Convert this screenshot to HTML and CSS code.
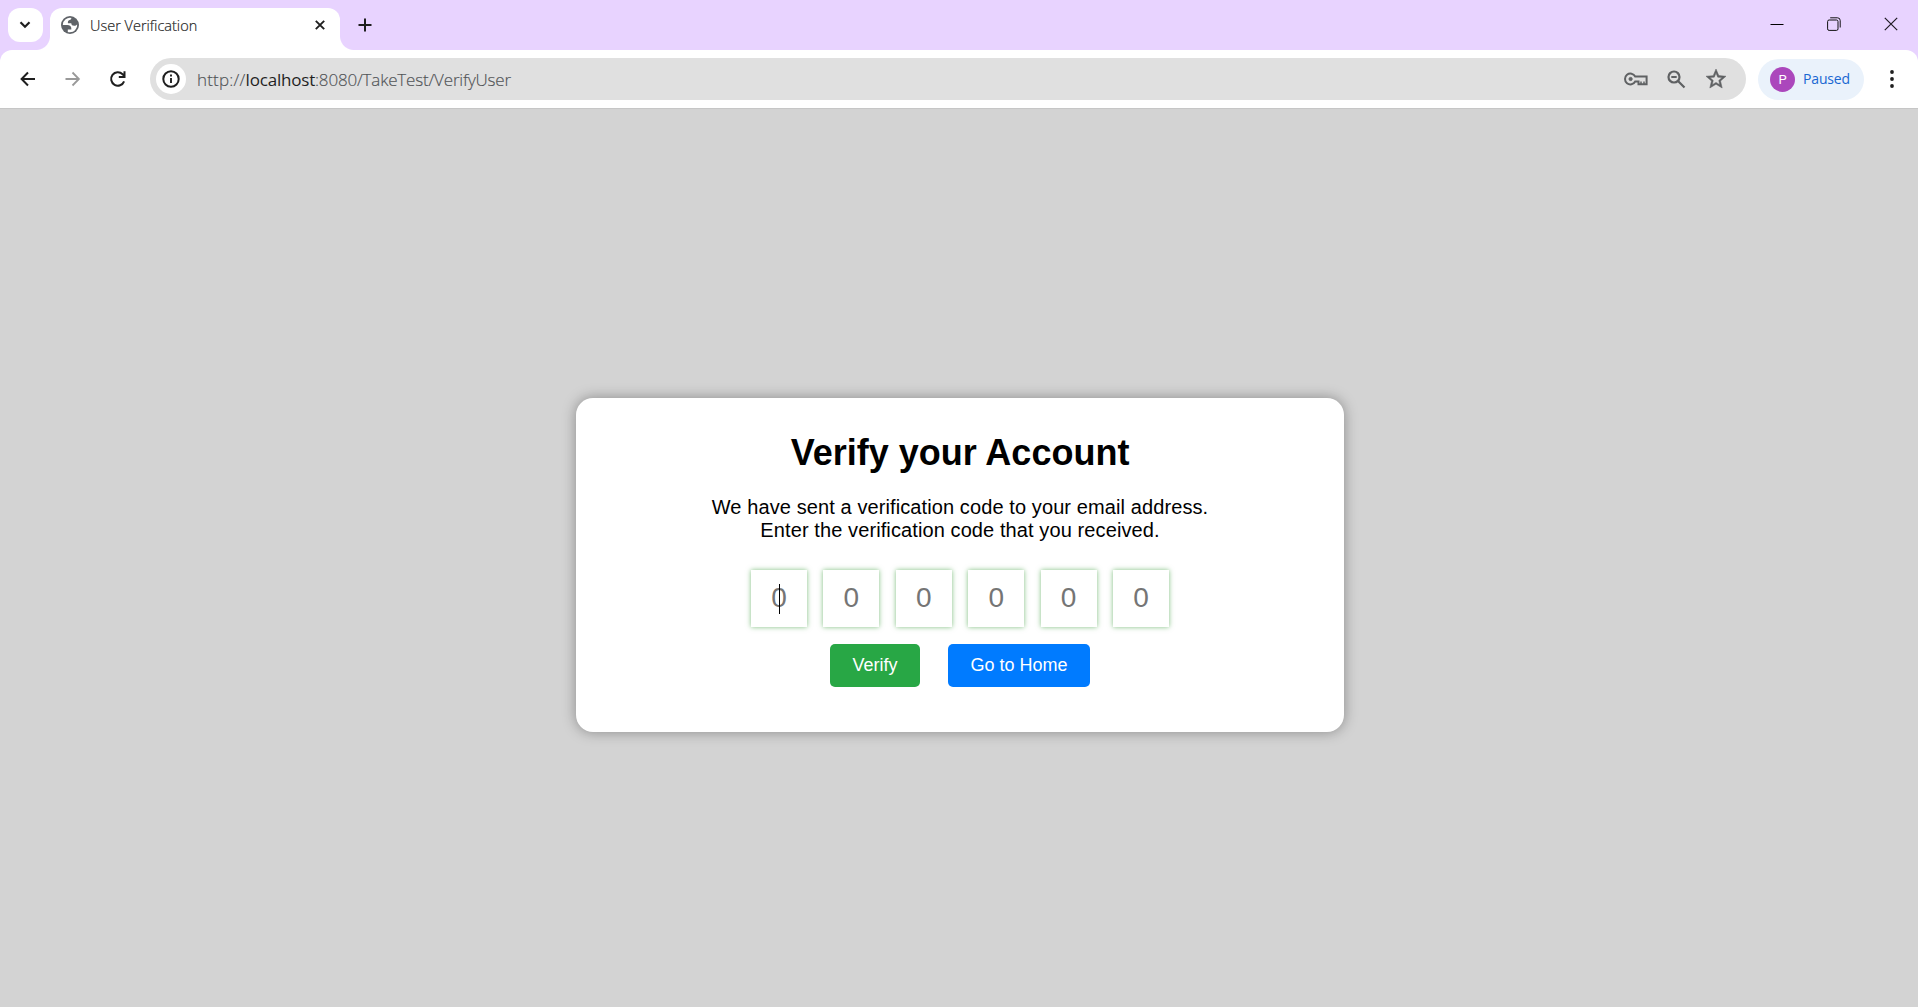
FILE: index.html
```html
<!DOCTYPE html>
<html lang="en">
<head>
<meta charset="utf-8">
<title>User Verification</title>
<link rel="stylesheet" href="styles.css">
</head>
<body>
<header class="tabstrip">
  <div class="tabsearch"><svg width="12" height="8" viewBox="0 0 12 8"><path d="M1.500 1.300 6 5.800l4.500-4.500" fill="none" stroke="#1f1f1f" stroke-width="2.200"/></svg></div>
  <div class="tab">
    <svg class="globe" width="18" height="18" viewBox="0 0 18 18"><circle cx="9" cy="9" r="9" fill="#5f6368"/><path fill="#fff" d="M11 2.100c-1 .4-1.300 1-1.300 1.700C7.600 3.800 6.500 5 7 7.300h3.300c0 1.700 1 2.500 2.900 2.500 1.300 0 2.100-.5 2.900-1.400A7.200 7.200 0 0 1 6.800 15.900v-2.300h3.500c.3-3-1-4.500-4.100-4.500H1.800A7.200 7.200 0 0 1 11 2.100z"/></svg>
    <span class="tab-title">User Verification</span>
    <svg class="tab-close" width="10" height="10" viewBox="0 0 10 10"><path d="m.8.800 8.400 8.400m0-8.400L.8 9.200" stroke="#1f1f1f" stroke-width="1.900"/></svg>
  </div>
  <svg class="newtab" width="14" height="14" viewBox="0 0 14 14"><path d="M7 .5v13M.5 7h13" stroke="#1f1f1f" stroke-width="2"/></svg>
  <div class="window-controls">
    <svg width="14" height="14" viewBox="0 0 14 14"><path d="M.5 7.500h13" stroke="#000"/></svg>
    <svg width="14" height="14" viewBox="0 0 14 14" fill="none" stroke="#111"><rect x=".6" y="3" width="10.400" height="10.400" rx="1.500"/><path d="M3.200.8h7.300a2.700 2.700 0 0 1 2.700 2.700v7"/></svg>
    <svg width="14" height="14" viewBox="0 0 14 14"><path d="m.8.800 12.400 12.400m0-12.400L.8 13.200" stroke="#1f1a24" stroke-width="1.200"/></svg>
  </div>
</header>
<nav class="toolbar">
  <svg class="back" width="16" height="16" viewBox="0 0 16 16"><path d="M15 8H2M8 1.500 1.600 8 8 14.500" fill="none" stroke="#1f1f1f" stroke-width="2"/></svg>
  <svg class="forward" width="16" height="16" viewBox="0 0 16 16"><path d="M.5 8H13.500M7.500 1.500 13.900 8l-6.400 6.500" fill="none" stroke="#999" stroke-width="1.800"/></svg>
  <svg class="reload" width="18" height="18" viewBox="0 0 18 18"><path d="M15.100 11.300A6.700 6.700 0 1 1 13.600 4.200l1.600 1.600M15.500 1.300v5.700H9.800" fill="none" stroke="#1f1f1f" stroke-width="2"/></svg>
  <div class="omnibox">
    <div class="site-info"><svg width="18" height="18" viewBox="0 0 18 18"><circle cx="9" cy="9" r="7.700" fill="none" stroke="#1f1f1f" stroke-width="2"/><path d="M9 8v5M9 4.600v2" stroke="#1f1f1f" stroke-width="1.900"/></svg></div>
    <span class="url"><span class="scheme">http://</span><b>localhost</b>:8080/TakeTest/VerifyUser</span>
    <svg class="key" width="24" height="14" viewBox="0 0 24 14" fill="none" stroke="#5f6163" stroke-width="2"><path d="M11.200 4.500A5.400 5.400 0 1 0 11.200 9.500H14.500V12.200H22.600V4.500Z"/><path d="M17 12V9.500M20 12V9.500" stroke-width="1.500"/><circle cx="6.600" cy="7" r="1.600" fill="#5f6163" stroke-width="1"/></svg>
    <svg class="zoom-out" width="19" height="19" viewBox="0 0 19 19" fill="none" stroke="#5f6163" stroke-width="2.200"><circle cx="7" cy="7" r="5.500"/><path d="m11 11 6.500 6.500M4.300 7h5.400"/></svg>
    <svg class="star" width="20" height="20" viewBox="2 2 20 20"><path fill="#5f6163" stroke="#5f6163" stroke-width=".5" d="m22 9.240-7.190-.62L12 2 9.190 8.630 2 9.240l5.460 4.730L5.820 21 12 17.270 18.180 21l-1.630-7.030L22 9.240zM12 15.400l-3.760 2.270 1-4.280-3.320-2.880 4.380-.38L12 6.100l1.710 4.040 4.380.38-3.320 2.880 1 4.280L12 15.400z"/></svg>
  </div>
  <div class="profile"><span class="avatar">P</span><span class="profile-label">Paused</span></div>
  <svg class="menu" width="4" height="18" viewBox="0 0 4 18" fill="#1f1f1f"><circle cx="2" cy="2" r="1.900"/><circle cx="2" cy="9" r="1.900"/><circle cx="2" cy="16" r="1.900"/></svg>
</nav>
<main class="page">
  <section class="card">
    <h1>Verify your Account</h1>
    <p>We have sent a verification code to your email address.<br>Enter the verification code that you received.</p>
    <div class="code">
      <div class="digit focused">0</div><div class="digit">0</div><div class="digit">0</div><div class="digit">0</div><div class="digit">0</div><div class="digit">0</div>
    </div>
    <div class="actions">
      <button class="btn verify">Verify</button>
      <button class="btn home">Go to Home</button>
    </div>
  </section>
</main>
</body>
</html>
```
FILE: styles.css
```css
* { box-sizing: border-box; }
body {
  margin: 0;
  height: 1007px;
  display: flex;
  flex-direction: column;
  overflow: hidden;
  background: #e8d3ff;
  font-family: "Liberation Sans", Arial, sans-serif;
}
svg { display: block; flex: none; }

.tabstrip {
  height: 50px;
  flex: none;
  display: flex;
  align-items: flex-start;
  padding: 8px 8px 0;
}
.tabsearch {
  width: 35px;
  height: 34px;
  padding-right: 1px;
  border-radius: 12px;
  background: #fff;
  display: flex;
  align-items: center;
  justify-content: center;
}
.tab {
  position: relative;
  width: 290px;
  height: 42px;
  margin-left: 7px;
  padding: 0 15px 8px 11px;
  border-radius: 12px 12px 0 0;
  background: #fff;
  display: flex;
  align-items: center;
}
.tab::before,
.tab::after {
  content: "";
  position: absolute;
  bottom: 0;
  width: 14px;
  height: 14px;
}
.tab::before { left: -14px; background: radial-gradient(circle at 0 0, transparent 13.5px, #fff 14.5px); }
.tab::after { right: -14px; background: radial-gradient(circle at 100% 0, transparent 13.5px, #fff 14.5px); }
.tab-title {
  margin: 2px 0 0 11px;
  font: 300 14.500px/20px "Open Sans", "Noto Sans", sans-serif;
  color: #1f1f1f;
  white-space: nowrap;
  -webkit-text-stroke: 0.200px #1f1f1f;
}
.tab-close { margin-left: auto; }
.newtab { margin: 10px 0 0 18px; }
.window-controls {
  margin: 9px 12px 0 auto;
  display: flex;
  gap: 43px;
}

.toolbar {
  height: 58px;
  flex: none;
  display: flex;
  align-items: center;
  padding: 0 24px 0 20px;
  border-radius: 12px 12px 0 0;
  background: #fff;
}
.forward { margin-left: 29px; }
.reload { margin-left: 28px; }
.omnibox {
  width: 1596px;
  height: 42px;
  margin-left: 23px;
  padding: 0 20px 0 6px;
  border-radius: 21px;
  background: #e0e0e0;
  display: flex;
  align-items: center;
}
.site-info {
  width: 30px;
  height: 30px;
  border-radius: 50%;
  background: #fff;
  display: flex;
  align-items: center;
  justify-content: center;
}
.url {
  margin: 2px 0 0 11px;
  font: 300 17px/26px "Open Sans", "Noto Sans", sans-serif;
  letter-spacing: -0.180px;
  color: #505356;
  white-space: nowrap;
  -webkit-text-stroke: 0.150px #505356;
}
.scheme { letter-spacing: 0.200px; }
.url b { font-weight: 400; color: #1f1f1f; letter-spacing: -0.200px; -webkit-text-stroke: 0; }
.key { margin-left: auto; }
.zoom-out { margin-left: 19px; }
.star { margin-left: 20px; }
.profile {
  width: 106px;
  height: 41px;
  margin-left: 12px;
  padding-left: 12px;
  border-radius: 21px;
  background: #eaf2fb;
  display: flex;
  align-items: center;
}
.avatar {
  width: 25px;
  height: 25px;
  border-radius: 50%;
  background: #ab47bc;
  color: #fff;
  font: 13px/25px Roboto, sans-serif;
  text-align: center;
}
.profile-label {
  margin-left: 8px;
  font: 400 14px/20px "Open Sans", "Noto Sans", sans-serif;
  letter-spacing: -0.150px;
  color: #1967d2;
}
.menu { margin-left: auto; }

.page {
  flex: 1;
  display: flex;
  flex-direction: column;
  align-items: center;
  padding: 289px 0 0 2px;
  border-top: 1px solid #c6c6c6;
  background: #d3d3d3;
}
.card {
  width: 768px;
  height: 334px;
  padding-top: 34px;
  border-radius: 17px;
  background: #fff;
  box-shadow: 0 0 14px rgba(0, 0, 0, 0.350);
  text-align: center;
}
h1 { margin: 0; font-size: 36px; line-height: 42px; }
p { margin: 22px 0 0; font-size: 20px; line-height: 23px; letter-spacing: 0.100px; }
.code {
  display: flex;
  justify-content: center;
  gap: 16.400px;
  margin-top: 28px;
}
.digit {
  position: relative;
  width: 56px;
  height: 57px;
  background: #fff;
  box-shadow: 0 0 5px rgba(0, 128, 0, 0.500);
  color: #757575;
  font-size: 28px;
  line-height: 55px;
}
.focused::after {
  content: "";
  position: absolute;
  left: 28px;
  top: 14px;
  width: 1px;
  height: 30px;
  background: #000;
}
.actions {
  display: flex;
  justify-content: center;
  gap: 28px;
  margin-top: 17px;
}
.btn {
  height: 43px;
  padding: 0 0 2px;
  border: 0;
  border-radius: 5px;
  color: #fff;
  font: 18px/22px "Liberation Sans", Arial, sans-serif;
}
.verify { width: 90px; background: #28a745; }
.home { width: 142px; background: #007bff; }
```
